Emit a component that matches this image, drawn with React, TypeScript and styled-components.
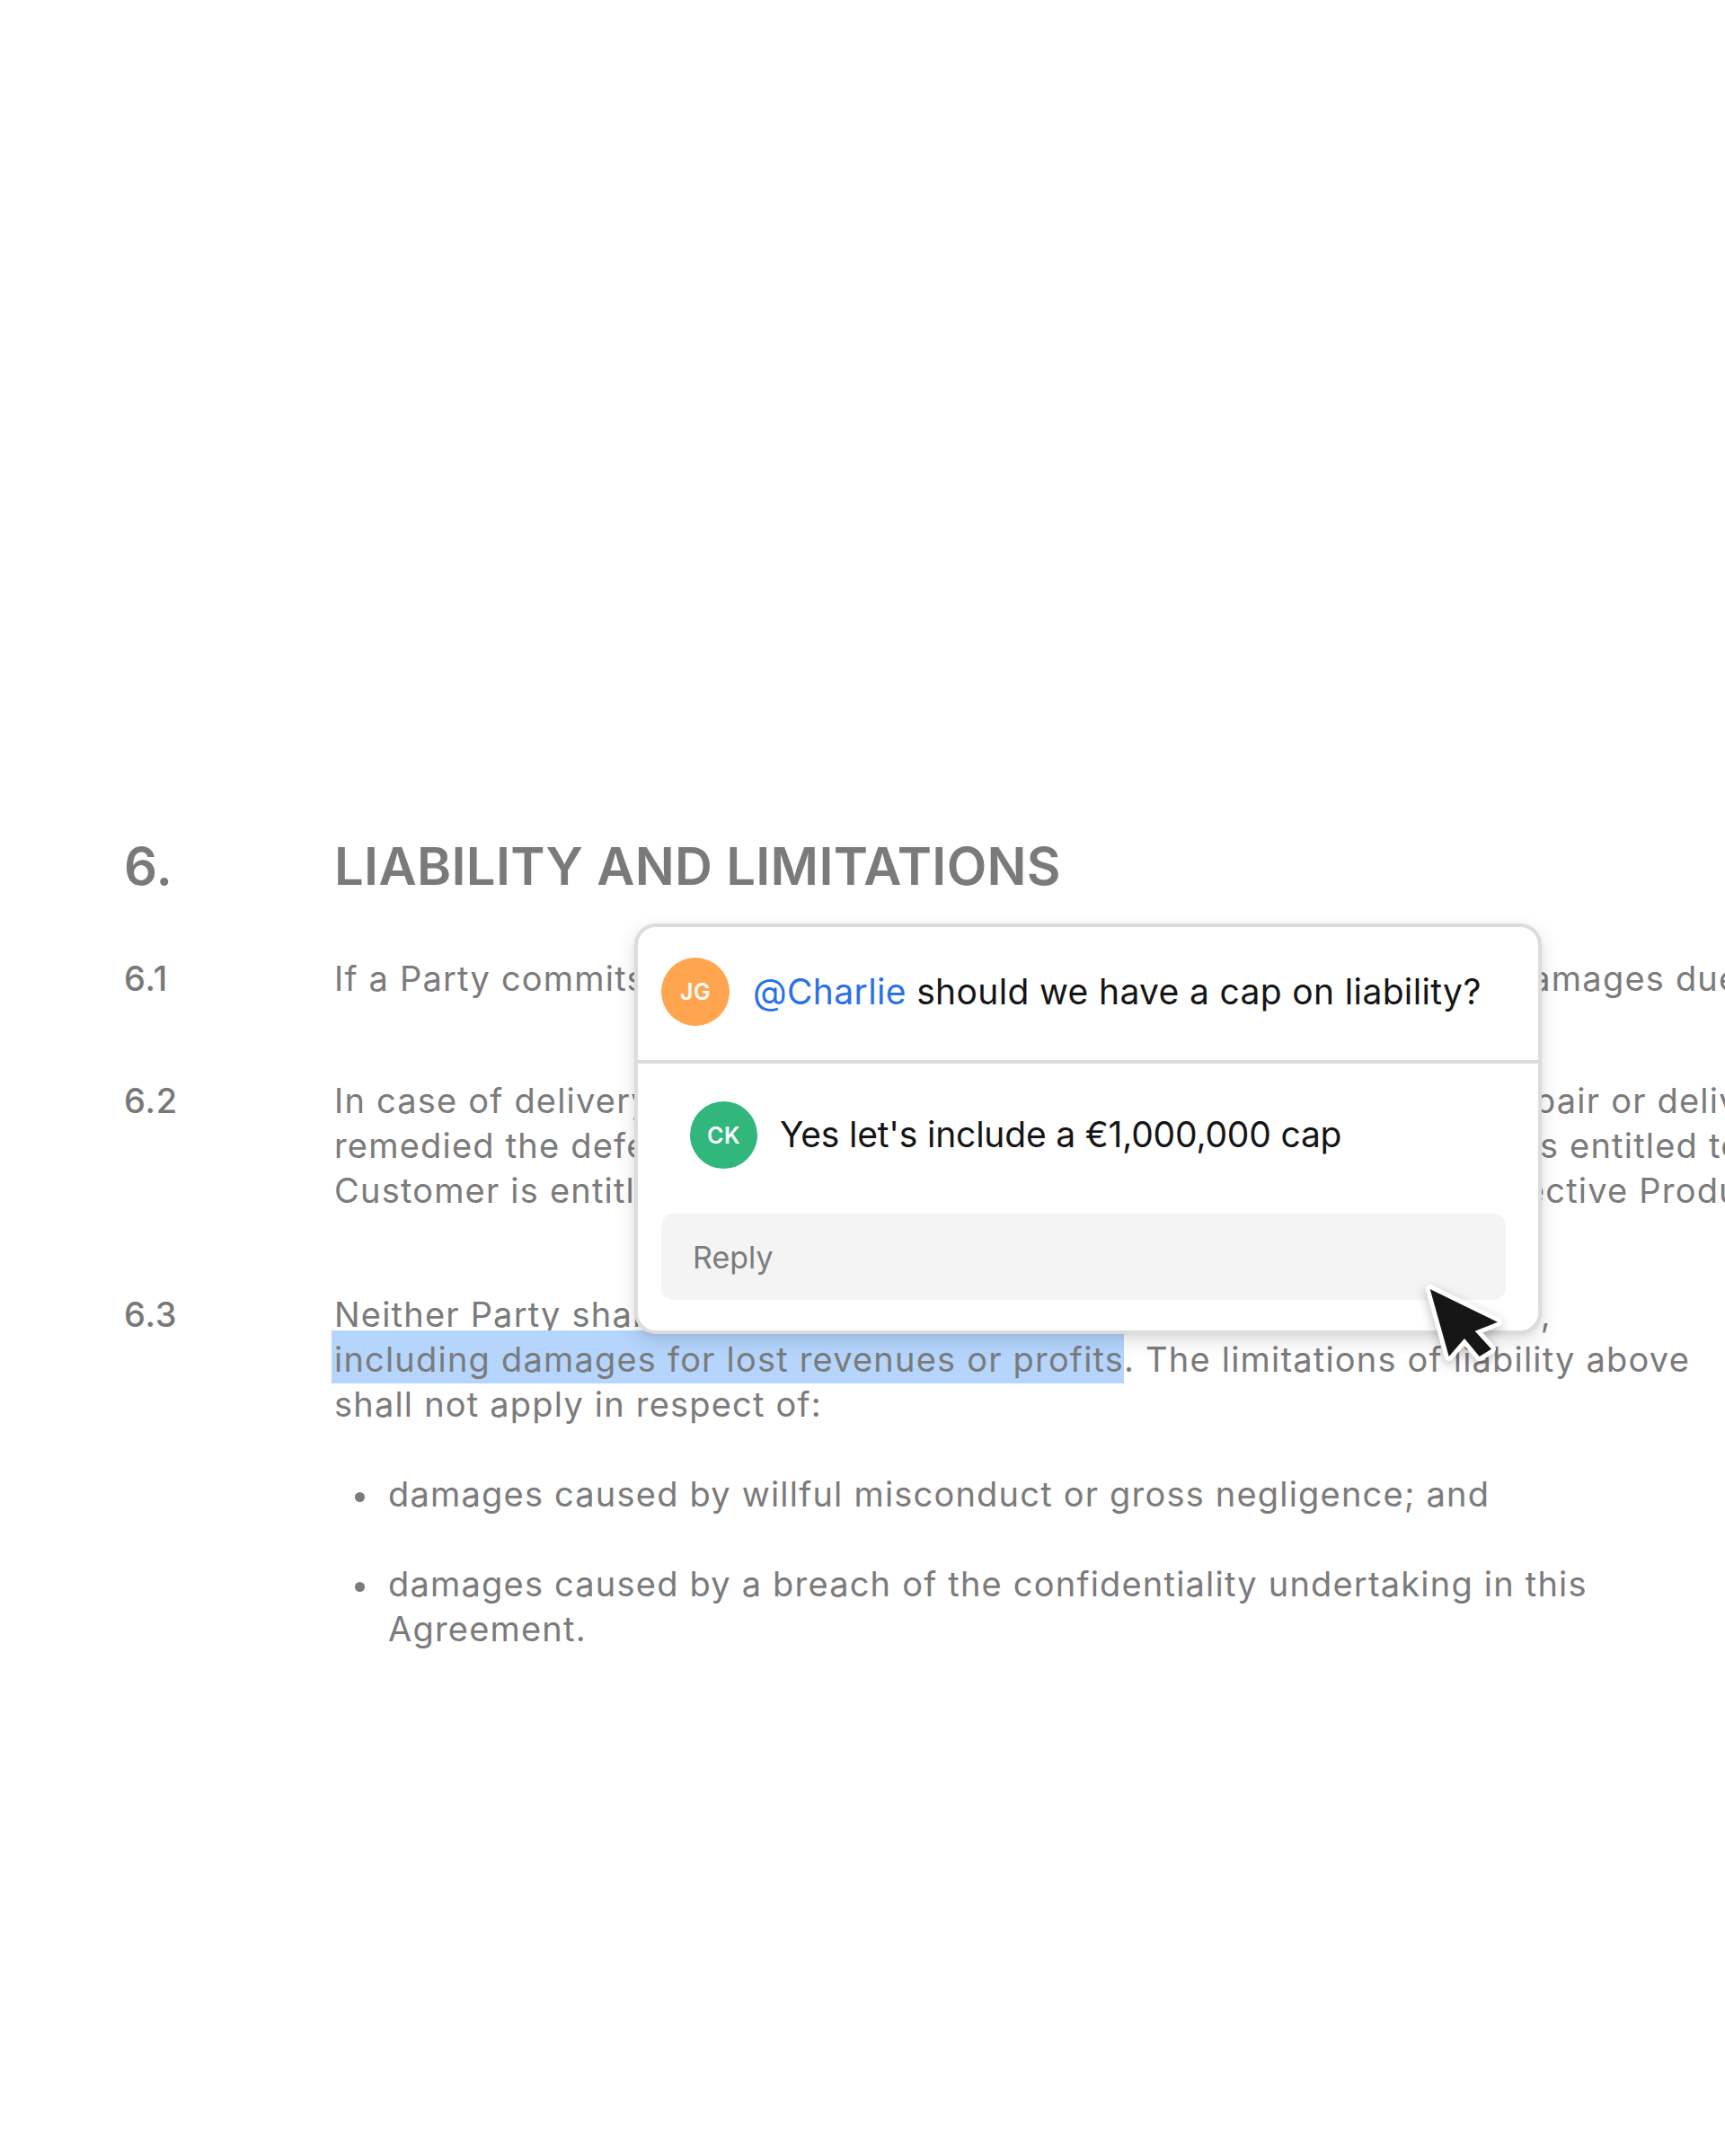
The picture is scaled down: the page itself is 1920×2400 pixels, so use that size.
import React from "react";
import styled, { createGlobalStyle } from "styled-components";

const GlobalStyle = createGlobalStyle`
  html, body {
    margin: 0;
    padding: 0;
    background: #ffffff;
  }
  * { box-sizing: border-box; }
`;

const FONT = `"Inter", "Liberation Sans", "DejaVu Sans", sans-serif`;

const Page = styled.main`
  position: relative;
  width: 1920px;
  height: 2400px;
  overflow: hidden;
  padding: 929px 0 0 138px;
  font-family: ${FONT};
  color: #7a7a7a;
  background: #ffffff;
`;

const SectionHeading = styled.h2`
  display: grid;
  grid-template-columns: 234px auto;
  margin: 0;
  font-size: 58px;
  line-height: 70px;
  font-weight: 600;
  color: #7a7a7a;
  letter-spacing: 0.3px;
`;

const Clause = styled.section<{ $gap: number }>`
  display: grid;
  grid-template-columns: 234px auto;
  margin-top: ${(p) => p.$gap}px;
  font-size: 38px;
  line-height: 50px;
`;

const ClauseNumber = styled.div`
  font-weight: 500;
  font-size: 38px;
  letter-spacing: 0.8px;
  color: #787878;
`;

const ClauseBody = styled.div`
  font-weight: 400;
  color: #7b7b7b;
  letter-spacing: 1.2px;
`;

const Line = styled.span`
  display: block;
  white-space: nowrap;
`;

const Highlight = styled.span`
  background: #b5d5fd;
  padding: 9px 0 4px 3px;
  margin-left: -3px;
`;

const BulletList = styled.ul`
  list-style: none;
  margin: 50px 0 0 0;
  padding: 0;
  display: flex;
  flex-direction: column;
  gap: 50px;
`;

const BulletItem = styled.li`
  display: grid;
  grid-template-columns: 60px auto;
`;

const BulletDot = styled.span`
  display: flex;
  align-items: center;
  height: 50px;
  padding: 7px 0 0 23px;
  &::after {
    content: "";
    width: 11px;
    height: 11px;
    border-radius: 50%;
    background: #7b7b7b;
  }
`;

const Popup = styled.div`
  position: absolute;
  left: 706px;
  top: 1028px;
  width: 1010px;
  height: 457px;
  border: 4px solid #dcdcdc;
  border-radius: 24px;
  background: #ffffff;
  box-shadow: 0 8px 22px rgba(0, 0, 0, 0.12), 0 2px 6px rgba(0, 0, 0, 0.06);
  display: flex;
  flex-direction: column;
  overflow: hidden;
  font-family: ${FONT};
`;

const ThreadHead = styled.div`
  height: 152px;
  display: flex;
  align-items: center;
  gap: 26px;
  padding: 0 26px 4px 26px;
  border-bottom: 4px solid #dcdcdc;
`;

const Avatar = styled.div<{ $bg: string; $size: number }>`
  flex: none;
  width: ${(p) => p.$size}px;
  height: ${(p) => p.$size}px;
  border-radius: 50%;
  background: ${(p) => p.$bg};
  color: #ffffff;
  display: flex;
  align-items: center;
  justify-content: center;
  font-size: 25px;
  font-weight: 600;
  letter-spacing: 0.5px;
`;

const Message = styled.p<{ $size: number; $track: number }>`
  margin: 0;
  font-size: ${(p) => p.$size}px;
  letter-spacing: ${(p) => p.$track}px;
  line-height: 1.2;
  color: #151515;
  white-space: nowrap;
`;

const Mention = styled.span`
  color: #2a70e8;
`;

const ReplyArea = styled.div`
  flex: 1;
  display: flex;
  flex-direction: column;
  padding: 42px 36px 33px 26px;
`;

const ReplyRow = styled.div`
  display: flex;
  align-items: center;
  gap: 25px;
  padding-left: 32px;
`;

const ReplyInput = styled.div`
  margin-top: 50px;
  height: 96px;
  border-radius: 14px;
  background: #f4f4f4;
  display: flex;
  align-items: center;
  padding-left: 35px;
  font-size: 34px;
  color: #7c7c7c;
`;

const Cursor = styled.svg`
  position: absolute;
  left: 1580px;
  top: 1420px;
  width: 100px;
  height: 100px;
  overflow: visible;
  filter: drop-shadow(0 4px 6px rgba(0, 0, 0, 0.25));
`;

export default function App() {
  return (
    <>
      <GlobalStyle />
      <Page>
        <SectionHeading>
          <span>6.</span>
          <span>LIABILITY AND LIMITATIONS</span>
        </SectionHeading>

        <Clause $gap={65}>
          <ClauseNumber>6.1</ClauseNumber>
          <ClauseBody>
            <Line>
              If a Party commits a material breach, the affected Party can seek all damages due to such breach.
            </Line>
          </ClauseBody>
        </Clause>

        <Clause $gap={86}>
          <ClauseNumber>6.2</ClauseNumber>
          <ClauseBody>
            <Line>
              In case of delivery of defective Products, the Supplier will promptly repair or deliver new Products. If the Supplier has not
            </Line>
            <Line>
              remedied the defect within sixty (60) days after notice, the Customer is entitled to a reduction of the price. The
            </Line>
            <Line>
              Customer is entitled to a full refund of the price paid for any such defective Products.
            </Line>
          </ClauseBody>
        </Clause>

        <Clause $gap={88}>
          <ClauseNumber>6.3</ClauseNumber>
          <ClauseBody>
            <Line>Neither Party shall be liable for any indirect or consequential damages,</Line>
            <Line>
              <Highlight>including damages for lost revenues or profits</Highlight>. The limitations of liability above
            </Line>
            <Line>shall not apply in respect of:</Line>
            <BulletList>
              <BulletItem>
                <BulletDot />
                <Line>damages caused by willful misconduct or gross negligence; and</Line>
              </BulletItem>
              <BulletItem>
                <BulletDot />
                <div>
                  <Line>damages caused by a breach of the confidentiality undertaking in this</Line>
                  <Line>Agreement.</Line>
                </div>
              </BulletItem>
            </BulletList>
          </ClauseBody>
        </Clause>

        <Popup>
          <ThreadHead>
            <Avatar $bg="#ffa54f" $size={76}>JG</Avatar>
            <Message $size={39} $track={0.35}>
              <Mention>@Charlie</Mention> should we have a cap on liability?
            </Message>
          </ThreadHead>
          <ReplyArea>
            <ReplyRow>
              <Avatar $bg="#31b77b" $size={75}>CK</Avatar>
              <Message $size={39} $track={-0.2}>Yes let's include a €1,000,000 cap</Message>
            </ReplyRow>
            <ReplyInput>Reply</ReplyInput>
          </ReplyArea>
        </Popup>

        <Cursor viewBox="0 0 100 100" aria-hidden="true">
          <path
            d="M11.7 15 L32.7 90 L50 70 L66.7 90 L80 81.7 L61.7 61.7 L87 51.7 Z"
            fill="#161616"
            stroke="#ffffff"
            strokeWidth="10"
            strokeLinejoin="round"
            paintOrder="stroke"
          />
        </Cursor>
      </Page>
    </>
  );
}
